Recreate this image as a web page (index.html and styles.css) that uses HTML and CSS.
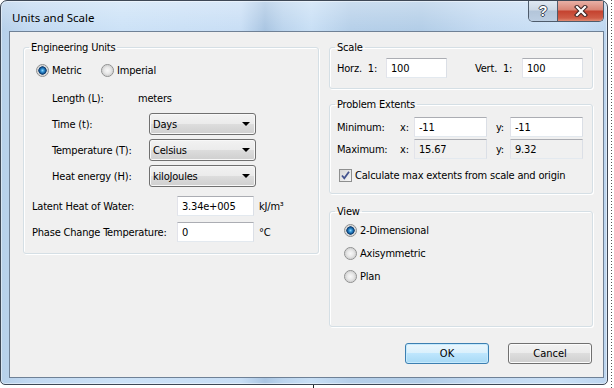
FILE: index.html
```html
<!DOCTYPE html>
<html lang="en">
<head>
    <meta charset="UTF-8">
    <meta name="viewport" content="width=device-width, initial-scale=1.0">
    <title>Units and Scale</title>
    <link rel="stylesheet" href="styles.css">
</head>
<body>
    <div class="window">
        <div class="titlebar">
            <span class="title">Units and Scale</span>
            <div class="caption-buttons">
                <span class="cap-btn help">?</span>
                <span class="cap-btn close">
                    <svg width="14" height="12" viewBox="0 0 14 12">
                        <path d="M3 2 L11 10 M11 2 L3 10" stroke="#3b2323" stroke-width="4.2" stroke-linecap="square" fill="none"/>
                        <path d="M3 2 L11 10 M11 2 L3 10" stroke="#fff" stroke-width="2.2" stroke-linecap="square" fill="none"/>
                    </svg>
                </span>
            </div>
        </div>
        <div class="client">
            <fieldset class="group units">
                <legend>Engineering Units</legend>
                <div class="row radios">
                    <span class="opt metric"><span class="radio on"></span>Metric</span>
                    <span class="opt"><span class="radio"></span>Imperial</span>
                </div>
                <div class="row indent">
                    <span class="lbl short">Length (L):</span>
                    <span>meters</span>
                </div>
                <div class="row indent">
                    <span class="lbl">Time (t):</span>
                    <div class="combo"><span>Days</span><span class="arrow"></span></div>
                </div>
                <div class="row indent">
                    <span class="lbl">Temperature (T):</span>
                    <div class="combo"><span>Celsius</span><span class="arrow"></span></div>
                </div>
                <div class="row indent">
                    <span class="lbl">Heat energy (H):</span>
                    <div class="combo"><span>kiloJoules</span><span class="arrow"></span></div>
                </div>
                <div class="row prop latent">
                    <span class="lbl">Latent Heat of Water:</span>
                    <div class="edit">3.34e+005</div>
                    <span class="unit">kJ/m³</span>
                </div>
                <div class="row prop">
                    <span class="lbl">Phase Change Temperature:</span>
                    <div class="edit">0</div>
                    <span class="unit">°C</span>
                </div>
            </fieldset>

            <div class="side">
                <fieldset class="group scale">
                    <legend>Scale</legend>
                    <div class="row scale-row">
                        <span class="lbl">Horz.&nbsp; 1:</span>
                        <div class="edit">100</div>
                        <span class="lbl vert">Vert.&nbsp; 1:</span>
                        <div class="edit">100</div>
                    </div>
                </fieldset>

                <fieldset class="group extents">
                    <legend>Problem Extents</legend>
                    <div class="row ext-row">
                        <span class="name">Minimum:</span>
                        <span class="axis">x:</span>
                        <div class="edit">-11</div>
                        <span class="axis y">y:</span>
                        <div class="edit">-11</div>
                    </div>
                    <div class="row ext-row">
                        <span class="name">Maximum:</span>
                        <span class="axis">x:</span>
                        <div class="edit ro">15.67</div>
                        <span class="axis y">y:</span>
                        <div class="edit ro">9.32</div>
                    </div>
                    <div class="row check-row">
                        <span class="check">
                            <svg width="11" height="11" viewBox="0 0 11 11">
                                <path d="M2 5.5 L4.3 8.3 L9 1.8" stroke="#44548f" stroke-width="1.8" fill="none"/>
                            </svg>
                        </span>
                        <span>Calculate max extents from scale and origin</span>
                    </div>
                </fieldset>

                <fieldset class="group view">
                    <legend>View</legend>
                    <div class="row opt"><span class="radio on"></span>2-Dimensional</div>
                    <div class="row opt"><span class="radio"></span>Axisymmetric</div>
                    <div class="row opt"><span class="radio"></span>Plan</div>
                </fieldset>

                <div class="buttons">
                    <button class="btn default">OK</button>
                    <button class="btn">Cancel</button>
                </div>
            </div>
        </div>
    </div>
</body>
</html>
```

FILE: styles.css
```css
* {
    box-sizing: border-box;
}
html, body {
    margin: 0;
}
body {
    width: 614px;
    height: 388px;
    overflow: hidden;
    background-color: #fff;
    background-image: linear-gradient(#555 1px, transparent 1px), linear-gradient(#222, #222);
    background-size: 1px 3px, 1px 100%;
    background-position: 611px 0, 313px 0;
    background-repeat: repeat-y, no-repeat;
    font-family: "DejaVu Sans Condensed", "DejaVu Sans", sans-serif;
    font-stretch: condensed;
    font-size: 11px;
    line-height: 13px;
    letter-spacing: -0.2px;
    color: #000;
}
.window {
    width: 608px;
    height: 385px;
    border: 1px solid #3e4856;
    border-radius: 7px 7px 5px 5px;
    padding: 0 3px 6px 8px;
    display: flex;
    flex-direction: column;
    background:
        linear-gradient(to bottom, rgba(255, 255, 255, 0.3), rgba(255, 255, 255, 0) 30px),
        linear-gradient(to right, #b6d0ea 0, #c2d9f1 30px, #cce2f7 120px, #c8def5 240px, #a9c5e2 264px, #bbd4ed 282px, #c8dff5 310px, #b5cfe9 350px, #b2cde7 420px, #c2d9f1 480px, #cae0f6 560px, #bcd5ef 608px);
    box-shadow: inset 0 0 0 1px rgba(255, 255, 255, 0.45);
}
.titlebar {
    height: 30px;
    flex: none;
    display: flex;
    justify-content: space-between;
    align-items: flex-start;
}
.title {
    padding: 9px 0 0 3px;
    font-family: "Noto Sans", "Open Sans", sans-serif;
    font-stretch: normal;
    font-size: 11.5px;
    letter-spacing: 0;
    line-height: 16px;
    color: #000;
}
.caption-buttons {
    display: flex;
    height: 21px;
    border: 1px solid #4e5b6b;
    border-top: none;
    border-radius: 0 0 5px 5px;
    overflow: hidden;
}
.cap-btn {
    display: flex;
    align-items: center;
    justify-content: center;
}
.help {
    width: 29px;
    border-right: 1px solid #4e5b6b;
    background: linear-gradient(#dfe8f1 0%, #ccd8e5 45%, #b3c5d9 50%, #bccee2 100%);
    font-family: "Liberation Sans", sans-serif;
    font-weight: bold;
    font-size: 14px;
    color: #fff;
    text-shadow: 1px 0 #3d4856, -1px 0 #3d4856, 0 1px #3d4856, 0 -1px #3d4856;
}
.close {
    width: 45px;
    background: linear-gradient(#e8b0a6 0%, #d98575 45%, #c4422f 50%, #cf5c46 85%, #e08a72 100%);
}
.client {
    flex: 1;
    border: 1px solid #6f8196;
    background-color: #f0f0f0;
    display: flex;
    align-items: flex-start;
    gap: 10px;
    padding: 9px 10px 0 13px;
}
.group {
    margin: 0;
    min-width: 0;
    border: 1px solid #d5dfe5;
    border-radius: 3px;
    box-shadow: 1px 1px 0 #fff, inset 1px 1px 0 #fff;
}
legend {
    padding: 0 2px;
    line-height: 13px;
}
.row {
    display: flex;
    align-items: center;
    white-space: nowrap;
}
.lbl, .name, .axis {
    flex: none;
}
.units {
    width: 296px;
    flex: none;
    padding: 3px 5px 8px;
}
.units .row {
    height: 26px;
}
.radios {
    padding-left: 7px;
    margin-bottom: 2px;
}
.opt {
    display: flex;
    align-items: center;
    gap: 3px;
}
.metric {
    width: 65px;
}
.indent {
    padding-left: 23px;
}
.indent .lbl {
    width: 97px;
}
.indent .lbl.short {
    width: 86px;
}
.prop {
    padding-left: 3px;
}
.prop .lbl {
    width: 145px;
}
.latent {
    margin-top: 4px;
}
.unit {
    margin-left: 5px;
}
.radio {
    width: 13px;
    height: 13px;
    flex: none;
    border-radius: 50%;
    border: 1px solid #8e8f8f;
    background: radial-gradient(circle, #f8f8f8 0, #e9e9e9 3px, #d6d6d6 5px, #f4f4f4 6px);
}
.radio.on {
    background:
        radial-gradient(circle, #8fd6fb 0, #3393d6 1.6px, #0f4b86 3.3px, #0b3565 3.9px, transparent 4.4px),
        radial-gradient(circle, #f8f8f8 0, #e9e9e9 3px, #d6d6d6 5px, #f4f4f4 6px);
}
.combo {
    width: 107px;
    height: 22px;
    border: 1px solid #707070;
    border-radius: 3px;
    background: linear-gradient(#f2f2f2 0%, #ebebeb 50%, #dddddd 50%, #cfcfcf 100%);
    box-shadow: inset 0 0 0 1px #f8f8f8;
    padding: 0 5px 0 3px;
    display: flex;
    align-items: center;
    justify-content: space-between;
}
.arrow {
    width: 0;
    height: 0;
    border-left: 4px solid transparent;
    border-right: 4px solid transparent;
    border-top: 4px solid #000;
}
.edit {
    width: 77px;
    height: 20px;
    flex: none;
    background-color: #fff;
    border: 1px solid;
    border-color: #abadb3 #dbdfe6 #e3e9ef #e2e3ea;
    padding: 0 4px;
    display: flex;
    align-items: center;
}
.edit.ro {
    background-color: #f0f0f0;
}
.side {
    width: 264px;
    flex: none;
    display: flex;
    flex-direction: column;
}
.scale {
    padding: 4px 5px 10px;
}
.scale-row {
    height: 20px;
    padding-left: 2px;
}
.scale-row .lbl {
    width: 49px;
}
.scale-row .lbl.vert {
    width: 47px;
    margin-left: 28px;
}
.scale-row .edit {
    width: 61px;
}
.extents {
    margin-top: 9px;
    padding: 6px 5px 8px;
}
.ext-row {
    height: 20px;
    padding-left: 2px;
}
.ext-row + .ext-row {
    margin-top: 2px;
}
.name {
    width: 63px;
}
.axis {
    width: 14px;
}
.axis.y {
    margin-left: 9px;
}
.ext-row .edit {
    width: 73px;
}
.check-row {
    height: 20px;
    margin-top: 6px;
    padding-left: 4px;
    gap: 3px;
}
.check {
    width: 13px;
    height: 13px;
    flex: none;
    border: 1px solid #8e8f8f;
    background: linear-gradient(135deg, #d8d8d8, #f6f6f6);
    display: flex;
    align-items: center;
    justify-content: center;
}
.view {
    margin-top: 11px;
    padding: 1px 5px 38px;
}
.view .opt {
    height: 23px;
    padding-left: 9px;
}
.buttons {
    display: flex;
    justify-content: flex-end;
    gap: 19px;
    margin-top: 16px;
    padding-right: 1px;
}
.btn {
    width: 84px;
    height: 21px;
    padding: 0;
    font: inherit;
    color: #000;
    border: 1px solid #707070;
    border-radius: 3px;
    background: linear-gradient(#f2f2f2 0%, #ebebeb 50%, #dddddd 50%, #cfcfcf 100%);
    box-shadow: inset 0 0 0 1px #fbfbfb;
}
.btn.default {
    border-color: #3c7fb1;
    background: linear-gradient(#eaf6fd 0%, #d9f0fc 50%, #bee6fd 50%, #a7d9f5 100%);
    box-shadow: inset 0 0 0 1px #c6eafd;
}
```
